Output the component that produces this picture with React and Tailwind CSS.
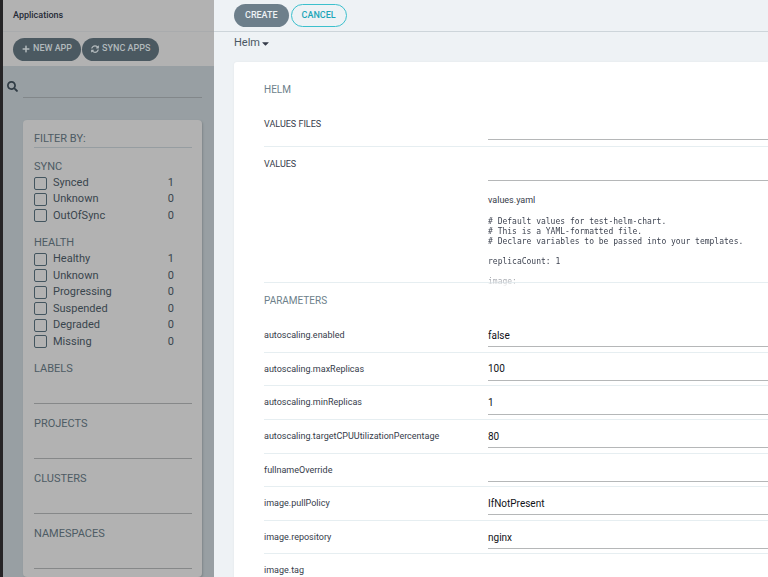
import { FaCaretDown, FaPlus, FaSearch, FaSyncAlt } from 'react-icons/fa';

const SYNC = [['Synced', 1], ['Unknown', 0], ['OutOfSync', 0]];
const HEALTH = [
  ['Healthy', 1],
  ['Unknown', 0],
  ['Progressing', 0],
  ['Suspended', 0],
  ['Degraded', 0],
  ['Missing', 0],
];
const TEXT_FILTERS = ['LABELS', 'PROJECTS', 'CLUSTERS', 'NAMESPACES'];
const PARAMETERS = [
  ['autoscaling.enabled', 'false'],
  ['autoscaling.maxReplicas', '100'],
  ['autoscaling.minReplicas', '1'],
  ['autoscaling.targetCPUUtilizationPercentage', '80'],
  ['fullnameOverride', ''],
  ['image.pullPolicy', 'IfNotPresent'],
  ['image.repository', 'nginx'],
  ['image.tag', ''],
];
const VALUES_YAML = `# Default values for test-helm-chart.
# This is a YAML-formatted file.
# Declare variables to be passed into your templates.

replicaCount: 1

image:`;

function CheckList({ group, items, className }) {
  return (
    <ul className={`grid auto-rows-fr ${className}`}>
      {items.map(([name, count]) => (
        <li key={name} className="flex items-center">
          <label className="flex flex-1 items-center gap-[6px] text-[#39454d]">
            <input
              type="checkbox"
              name={`${group}-${name}`}
              className="size-[13px] appearance-none rounded-[2px] border border-[#43555f]"
            />
            {name}
          </label>
          <span className="mr-[18px] text-[#39454d]">{count}</span>
        </li>
      ))}
    </ul>
  );
}

function Sidebar() {
  return (
    <div className="flex w-[214px] shrink-0 flex-col border-l-[3px] border-[#252426] bg-[#989fa3]">
      <header className="flex h-8 shrink-0 items-center border-b border-[#a9abad] bg-[#b2b2b2] pl-[10px]">
        <h1 className="text-[9px] font-medium text-[#252a36]">Applications</h1>
      </header>
      <div className="flex h-[34px] shrink-0 items-center gap-px bg-[#b2b2b2] pl-[10px] text-[9px] font-medium text-[#b2b9bc]">
        <button className="flex h-[23px] items-center gap-[3px] rounded-full bg-[#4b5961] px-[9px]">
          <FaPlus className="size-2" />
          NEW APP
        </button>
        <button className="flex h-[23px] items-center gap-[3px] rounded-full bg-[#4b5961] px-[9px]">
          <FaSyncAlt className="size-2" />
          SYNC APPS
        </button>
      </div>
      <div className="flex h-8 shrink-0 items-end gap-[5px] pr-3 pl-1">
        <FaSearch className="mb-[6px] size-[11px] text-[#303c45]" />
        <input
          aria-label="Search applications"
          className="h-6 min-w-0 flex-1 border-b border-[#82878a] bg-transparent text-[10px] outline-none"
        />
      </div>
      <section className="mt-[22px] mr-3 ml-5 rounded-[4px] bg-[#b2b2b2] pt-[11px] pr-[10px] pb-2 pl-[11px] text-[11px] leading-4 text-[#4d5b64] shadow-[1px_1px_2px_#7f868a]">
        <h2 className="h-[17px] border-b border-[#969da1]">FILTER BY:</h2>
        <h3 className="mt-[11px]">SYNC</h3>
        <CheckList group="sync" items={SYNC} className="h-[49px]" />
        <h3 className="mt-[11px]">HEALTH</h3>
        <CheckList group="health" items={HEALTH} className="h-[99px]" />
        <div className="mt-[11px] grid gap-3">
          {TEXT_FILTERS.map((name) => (
            <label key={name} className="block">
              {name}
              <input className="block h-[27px] w-full border-b border-[#868889] bg-transparent outline-none" />
            </label>
          ))}
        </div>
      </section>
    </div>
  );
}

function LineInput({ id, value = '' }) {
  return (
    <input
      id={id}
      defaultValue={value}
      className="h-6 w-full border-b border-[#b5b7b8] bg-transparent pt-px text-[10px] text-[#111318] outline-none"
    />
  );
}

const ROW = 'grid grid-cols-[224px_minmax(0,1fr)] border-b border-[#e6eef1]';

function HelmForm() {
  return (
    <form className="ml-5 flex-1 rounded-tl-[3px] bg-white pt-5 pl-[30px] text-[9px] text-[#363c4a] shadow-[0_0_2px_#dfe5e9]">
      <h2 className="text-[10px] leading-4 text-[#6d7f8b]">HELM</h2>
      <div className={`${ROW} mt-[18px] h-[31px]`}>
        <label htmlFor="value-files" className="leading-4">VALUES FILES</label>
        <LineInput id="value-files" />
      </div>
      <div className={`${ROW} h-[136px]`}>
        <label htmlFor="values" className="pt-[9px] leading-4">VALUES</label>
        <div className="flex min-w-0 flex-col pt-[10px]">
          <LineInput id="values" />
          <p className="mt-[11px] leading-4">values.yaml</p>
          <pre className="mt-[9px] bg-linear-to-b from-[#363c4a] from-75% to-white bg-clip-text font-['DejaVu_Sans_Mono',monospace] text-[8px] leading-[10px] text-transparent">
            {VALUES_YAML}
          </pre>
        </div>
      </div>
      <h2 className="py-[10px] text-[10px] leading-4 text-[#6d7f8b]">PARAMETERS</h2>
      <div className="grid h-[269px] auto-rows-fr">
        {PARAMETERS.map(([name, value]) => (
          <div key={name} className={`${ROW} items-center`}>
            <label htmlFor={name} className="pt-px">{name}</label>
            <LineInput id={name} value={value} />
          </div>
        ))}
      </div>
    </form>
  );
}

export default function App() {
  return (
    <div className="flex h-screen overflow-hidden font-['Roboto',sans-serif]">
      <Sidebar />
      <main className="flex min-w-0 flex-1 flex-col bg-[#eef2f5]">
        <header className="flex h-8 shrink-0 items-center gap-[2px] border-b border-[#cdd5da] pl-5 text-[9px] font-medium">
          <button className="h-[23px] rounded-full bg-[#6d7f8b] px-[11px] text-[#eef2f5]">CREATE</button>
          <button className="h-[23px] rounded-full border border-[#3cc0cd] px-[10px] text-[#1ba5b8]">CANCEL</button>
        </header>
        <div className="flex h-[30px] shrink-0 items-start pt-[3px] pl-5 text-[11px] leading-4 text-[#495763]">
          <select aria-label="Source type" className="appearance-none bg-transparent [field-sizing:content]">
            <option>Helm</option>
            <option>Kustomize</option>
            <option>Directory</option>
          </select>
          <FaCaretDown className="mt-[3px] size-[11px] text-[#363c4a]" />
        </div>
        <HelmForm />
      </main>
    </div>
  );
}
